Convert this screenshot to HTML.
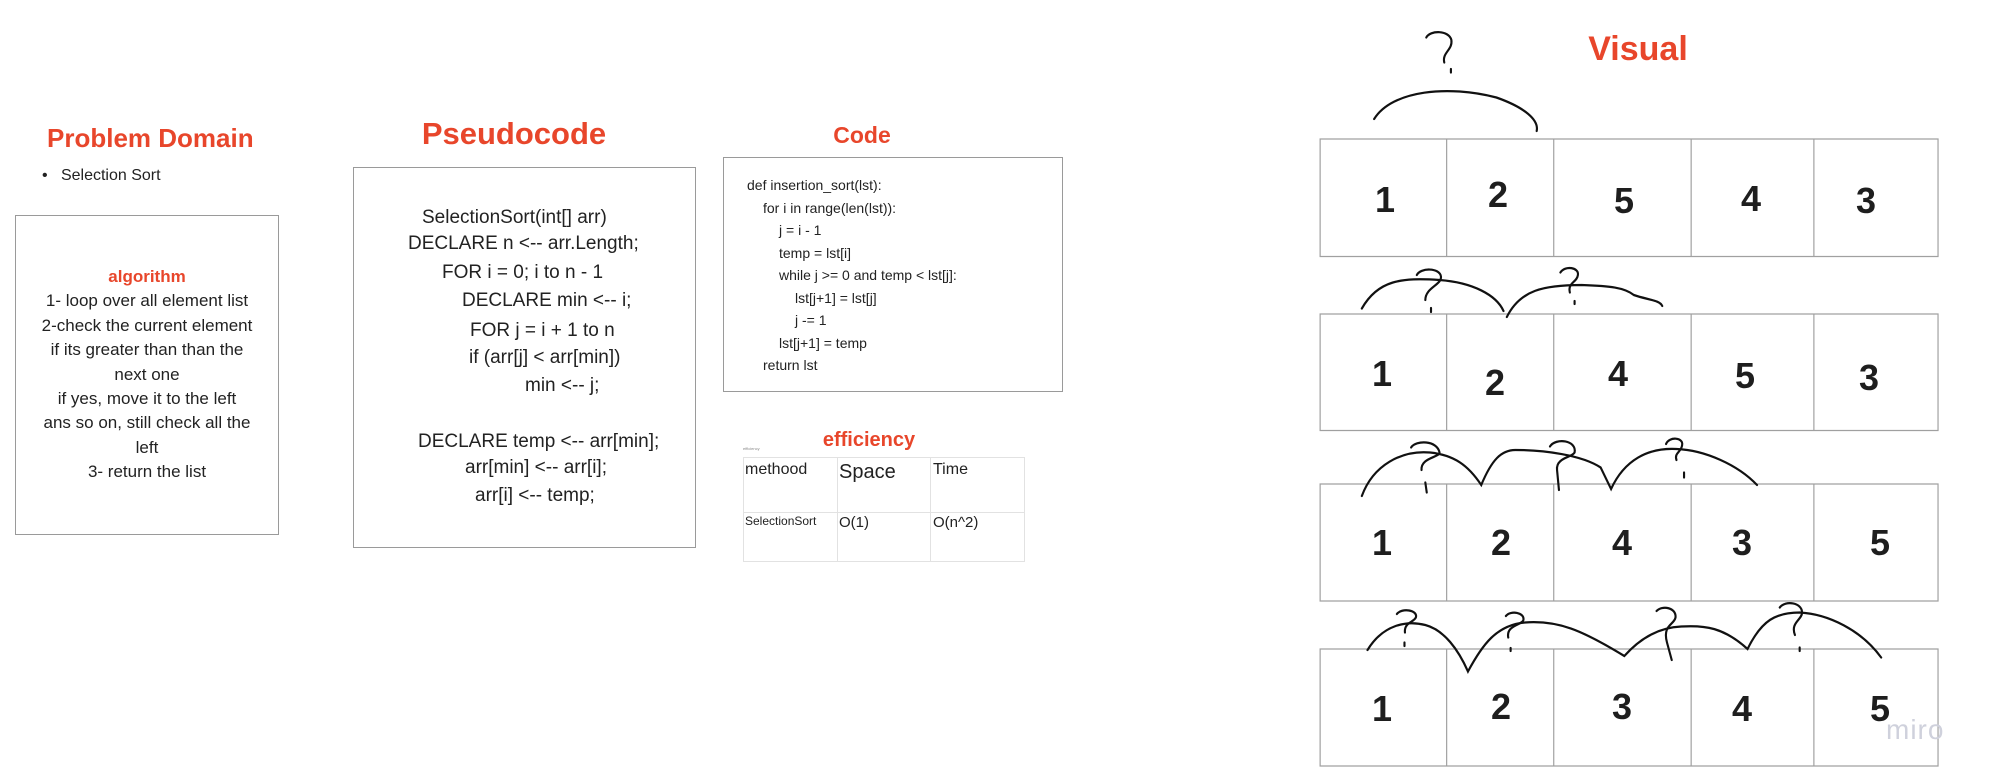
<!DOCTYPE html>
<html><head><meta charset="utf-8"><style>
body{margin:0;width:1993px;height:783px;background:#fff;position:relative;overflow:hidden;font-family:"Liberation Sans",sans-serif;color:#222}
.a{position:absolute;white-space:nowrap}
.t{color:#e8462b;font-weight:bold}
.box{position:absolute;border:1.5px solid #9a9a9a;background:#fff}
.n{position:absolute;font-weight:bold;font-size:36px;line-height:40px;width:40px;text-align:center;margin-left:-20px;margin-top:-20px;color:#1e1e1e}
</style></head><body>
<div class="a t" style="left:47px;top:123px;font-size:26px;line-height:30px;width:200px;text-align:center">Problem Domain</div>
<div class="a" style="left:42px;top:166px;font-size:16px;line-height:20px">•&nbsp;&nbsp; Selection Sort</div>
<div class="box" style="left:15px;top:215px;width:262px;height:318px"></div>
<div class="a" style="left:15px;top:265px;width:264px;text-align:center;font-size:17px;line-height:24.4px">
<span class="t">algorithm</span><br>1- loop over all element list<br>2-check the current element<br>if its greater than than the<br>next one<br>if yes, move it to the left<br>ans so on, still check all the<br>left<br>3- return the list</div>

<div class="a t" style="left:364px;top:116px;font-size:31px;line-height:36px;width:300px;text-align:center">Pseudocode</div>
<div class="box" style="left:353px;top:167px;width:341px;height:379px"></div>
<div style="font-size:19px;line-height:22px">
<div class="a" style="left:422px;top:207px">SelectionSort(int[] arr)</div>
<div class="a" style="left:408px;top:233px">DECLARE n &lt;-- arr.Length;</div>
<div class="a" style="left:442px;top:262px">FOR i = 0; i to n - 1</div>
<div class="a" style="left:462px;top:290px">DECLARE min &lt;-- i;</div>
<div class="a" style="left:470px;top:320px">FOR j = i + 1 to n</div>
<div class="a" style="left:469px;top:347px">if (arr[j] &lt; arr[min])</div>
<div class="a" style="left:525px;top:375px">min &lt;-- j;</div>
<div class="a" style="left:418px;top:431px">DECLARE temp &lt;-- arr[min];</div>
<div class="a" style="left:465px;top:457px">arr[min] &lt;-- arr[i];</div>
<div class="a" style="left:475px;top:485px">arr[i] &lt;-- temp;</div>
</div>

<div class="a t" style="left:762px;top:121px;font-size:23px;line-height:28px;width:200px;text-align:center">Code</div>
<div class="box" style="left:723px;top:157px;width:338px;height:233px"></div>
<div class="a" style="left:747px;top:174px;font-size:14px;line-height:22.5px">
def insertion_sort(lst):<br>
<span style="padding-left:16px">for i in range(len(lst)):</span><br>
<span style="padding-left:32px">j = i - 1</span><br>
<span style="padding-left:32px">temp = lst[i]</span><br>
<span style="padding-left:32px">while j &gt;= 0 and temp &lt; lst[j]:</span><br>
<span style="padding-left:48px">lst[j+1] = lst[j]</span><br>
<span style="padding-left:48px">j -= 1</span><br>
<span style="padding-left:32px">lst[j+1] = temp</span><br>
<span style="padding-left:16px">return lst</span></div>

<div class="a t" style="left:769px;top:428px;font-size:20px;line-height:24px;width:200px;text-align:center">efficiency</div>
<div class="a" style="left:743px;top:446px;font-size:4px;color:#888">efficiency</div>
<div class="a" style="left:743px;top:457px;width:280px;height:103px;border:1px solid #e2e2e2"></div>
<div class="a" style="left:837px;top:457px;width:1px;height:105px;background:#e2e2e2"></div>
<div class="a" style="left:930px;top:457px;width:1px;height:105px;background:#e2e2e2"></div>
<div class="a" style="left:743px;top:512px;width:281px;height:1px;background:#e2e2e2"></div>
<div class="a" style="left:745px;top:461px;font-size:16px">methood</div>
<div class="a" style="left:839px;top:461px;font-size:20px">Space</div>
<div class="a" style="left:933px;top:461px;font-size:16px">Time</div>
<div class="a" style="left:745px;top:514px;font-size:12px">SelectionSort</div>
<div class="a" style="left:839px;top:514px;font-size:15px">O(1)</div>
<div class="a" style="left:933px;top:514px;font-size:15px">O(n^2)</div>

<div class="a t" style="left:1538px;top:29px;font-size:34px;line-height:40px;width:200px;text-align:center">Visual</div>

<svg class="a" style="left:1250px;top:0" width="743" height="783" viewBox="0 0 1568 1566" preserveAspectRatio="none">
<g fill="none" stroke="#a0a0a0" stroke-width="2.5">
<rect x="148" y="278" width="1304" height="235"/><rect x="148" y="628" width="1304" height="233"/>
<rect x="148" y="968" width="1304" height="234"/><rect x="148" y="1298" width="1304" height="234"/>
<path d="M415 278V513M641 278V513M931 278V513M1190 278V513M415 628V861M641 628V861M931 628V861M1190 628V861M415 968V1202M641 968V1202M931 968V1202M1190 968V1202M415 1298V1532M641 1298V1532M931 1298V1532M1190 1298V1532"/>
</g>
<g fill="none" stroke="#111" stroke-width="4.5" stroke-linecap="round">
<path d="M262,238 C300,180 420,170 520,195 C580,215 610,240 605,262"/>
<path d="M372,75 C380,60 420,60 425,80 C428,100 405,105 410,125 M424,138 L424,145"/>
<path d="M236,617 C270,560 320,555 400,560 C470,565 520,590 535,622"/>
<path d="M352,550 C360,535 400,535 403,553 C405,570 370,575 370,600 M382,616 L382,624"/>
<path d="M542,634 C570,580 620,570 700,570 C760,572 790,575 810,590 C840,600 865,600 870,612"/>
<path d="M655,545 C665,530 695,535 692,550 C690,565 670,565 675,585 M685,602 L685,608"/>
<path d="M236,992 C260,930 320,900 380,905 C430,910 460,930 488,970 C510,920 530,900 560,900 C620,900 700,910 740,935 L762,978 C790,920 840,895 900,898 C960,900 1030,930 1070,970"/>
<path d="M340,895 C350,880 395,880 400,905 C400,915 360,915 362,940 M370,965 L373,985"/>
<path d="M633,893 C645,875 690,880 685,905 C680,915 645,915 648,940 L652,980"/>
<path d="M878,888 C885,872 915,875 912,890 C910,905 895,905 900,920 M916,945 L916,955"/>
<path d="M248,1300 C280,1250 330,1240 370,1250 C410,1260 440,1300 460,1343 C490,1290 520,1250 580,1245 C650,1240 700,1260 790,1312 C820,1280 860,1255 910,1253 C960,1250 1000,1255 1050,1298 C1080,1240 1110,1225 1160,1225 C1220,1228 1290,1260 1332,1315"/>
<path d="M310,1228 C320,1215 355,1220 350,1235 C345,1245 325,1245 327,1265 M326,1285 L326,1292"/>
<path d="M540,1232 C550,1220 580,1225 577,1240 C575,1250 540,1250 545,1275 M550,1296 L550,1302"/>
<path d="M858,1222 C870,1210 900,1215 898,1235 C895,1250 870,1250 880,1285 L890,1320"/>
<path d="M1118,1215 C1130,1200 1165,1205 1165,1225 C1165,1240 1140,1245 1150,1270 M1160,1295 L1160,1302"/>
</g>
</svg>

<div class="n" style="left:1385px;top:200px">1</div><div class="n" style="left:1498px;top:195px">2</div><div class="n" style="left:1624px;top:201px">5</div><div class="n" style="left:1751px;top:199px">4</div><div class="n" style="left:1866px;top:201px">3</div>
<div class="n" style="left:1382px;top:374px">1</div><div class="n" style="left:1495px;top:383px">2</div><div class="n" style="left:1618px;top:374px">4</div><div class="n" style="left:1745px;top:376px">5</div><div class="n" style="left:1869px;top:378px">3</div>
<div class="n" style="left:1382px;top:543px">1</div><div class="n" style="left:1501px;top:543px">2</div><div class="n" style="left:1622px;top:543px">4</div><div class="n" style="left:1742px;top:543px">3</div><div class="n" style="left:1880px;top:543px">5</div>
<div class="n" style="left:1382px;top:709px">1</div><div class="n" style="left:1501px;top:707px">2</div><div class="n" style="left:1622px;top:707px">3</div><div class="n" style="left:1742px;top:709px">4</div><div class="n" style="left:1880px;top:709px">5</div>
<div class="a" style="left:1886px;top:714px;font-size:28px;line-height:32px;color:#cfd1dc;letter-spacing:1px">miro</div>
</body></html>
